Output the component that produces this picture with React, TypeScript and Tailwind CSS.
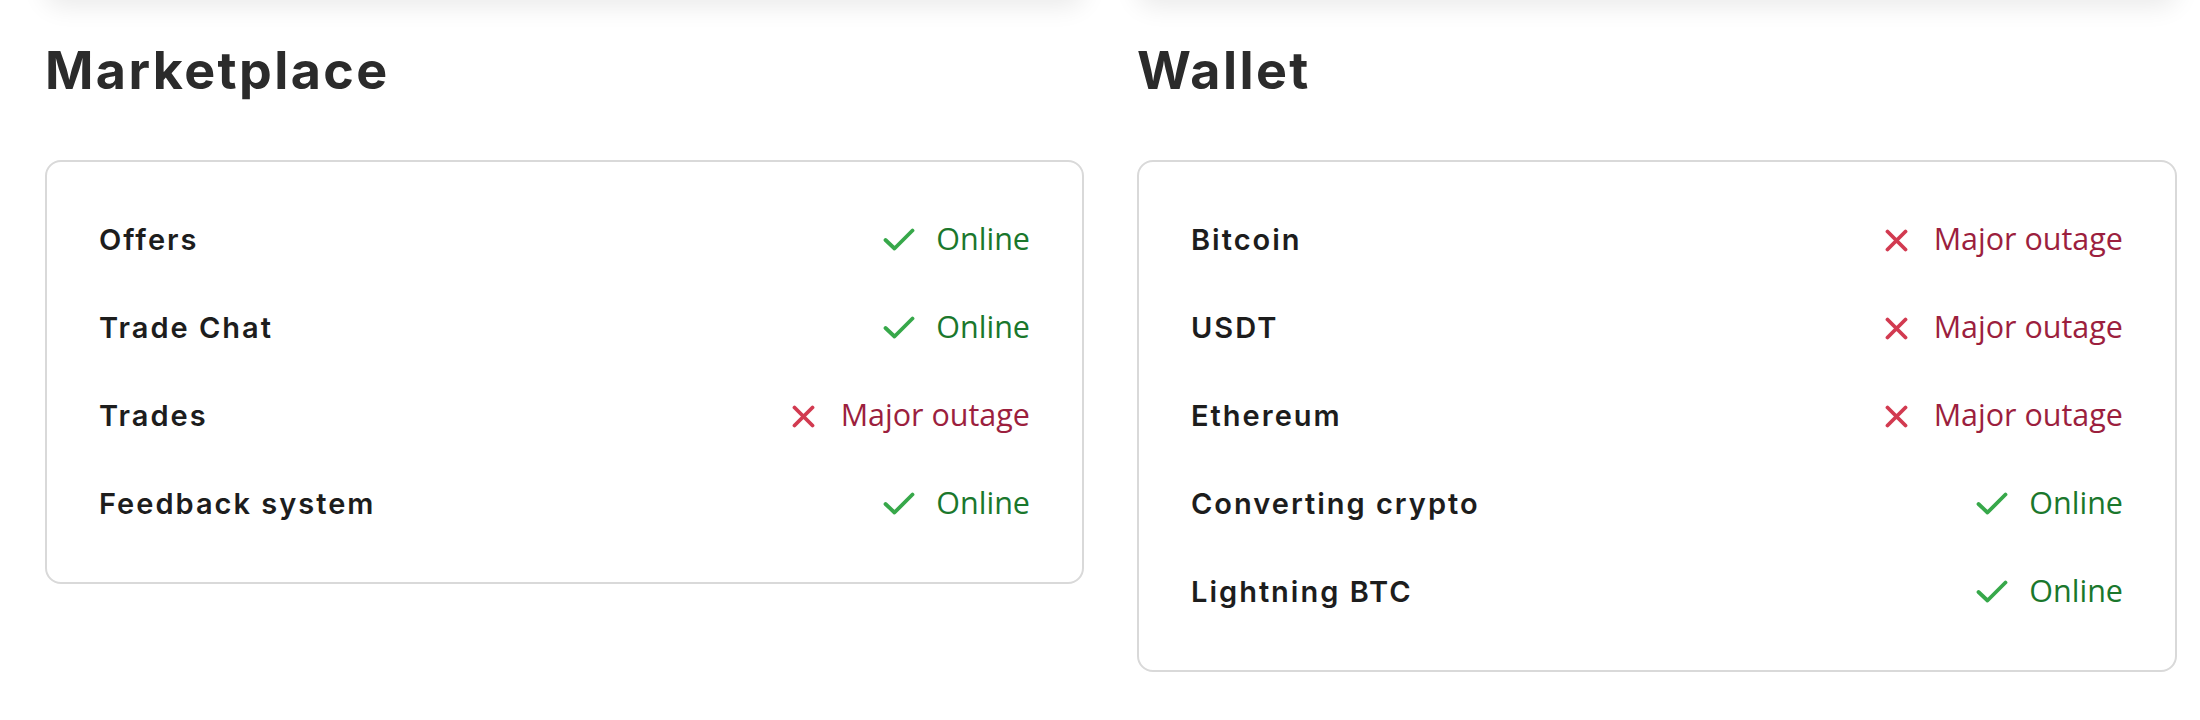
import React from "react";

type Status = "online" | "outage";
type Item = { name: string; status: Status };

const marketplace: Item[] = [
  { name: "Offers", status: "online" },
  { name: "Trade Chat", status: "online" },
  { name: "Trades", status: "outage" },
  { name: "Feedback system", status: "online" },
];

const wallet: Item[] = [
  { name: "Bitcoin", status: "outage" },
  { name: "USDT", status: "outage" },
  { name: "Ethereum", status: "outage" },
  { name: "Converting crypto", status: "online" },
  { name: "Lightning BTC", status: "online" },
];

function CheckIcon() {
  return (
    <svg width="32" height="24" viewBox="0 0 32 24" fill="none">
      <polyline
        points="2.5,12 11.5,20.5 29.5,2.5"
        stroke="#37a84a"
        strokeWidth="3.8"
        strokeLinecap="round"
        strokeLinejoin="round"
      />
    </svg>
  );
}

function XIcon() {
  return (
    <svg width="23" height="23" viewBox="0 0 23 23" fill="none">
      <path
        d="M2.5 2.5 L20.5 20.5 M20.5 2.5 L2.5 20.5"
        stroke="#d23a50"
        strokeWidth="3.8"
        strokeLinecap="round"
      />
    </svg>
  );
}

function Row({ item }: { item: Item }) {
  const online = item.status === "online";
  return (
    <div className="flex h-[88px] items-center justify-between">
      <span className="font-['Inter',sans-serif] text-[29px] font-semibold tracking-[2px] text-[#1d1d1d]">
        {item.name}
      </span>
      <span className="flex items-center gap-[21px]">
        <span className="flex w-[32px] justify-center">
          {online ? <CheckIcon /> : <XIcon />}
        </span>
        <span
          className={
            "-translate-y-px font-['Open_Sans',sans-serif] text-[30.5px] " +
            (online ? "text-[#1a772c]" : "text-[#9c1f3e]")
          }
        >
          {online ? "Online" : "Major outage"}
        </span>
      </span>
    </div>
  );
}

function Section({ title, items, width }: { title: string; items: Item[]; width: string }) {
  return (
    <div className={"flex flex-col " + width}>
      <h2 className="mt-[39px] font-['Inter',sans-serif] text-[52px] font-bold leading-[64px] tracking-[2.4px] text-[#2b2b2b]">
        {title}
      </h2>
      <div className="mt-[57px] rounded-[16px] border-2 border-[#d9d9d9] bg-white px-[52px] py-[34px]">
        {items.map((it) => (
          <Row key={it.name} item={it} />
        ))}
      </div>
    </div>
  );
}

export default function App() {
  return (
    <div className="h-[720px] w-[2200px] overflow-hidden bg-white">
      <div className="flex gap-[53px] pl-[45px]">
        <div className="-mt-[30px] h-[30px] w-[1039px] rounded-b-[16px] bg-white shadow-[0_6px_26px_rgba(0,0,0,0.09)]" />
        <div className="-mt-[30px] h-[30px] w-[1040px] rounded-b-[16px] bg-white shadow-[0_6px_26px_rgba(0,0,0,0.09)]" />
      </div>
      <div className="flex gap-[53px] pl-[45px]">
        <Section title="Marketplace" items={marketplace} width="w-[1039px]" />
        <Section title="Wallet" items={wallet} width="w-[1040px]" />
      </div>
    </div>
  );
}
